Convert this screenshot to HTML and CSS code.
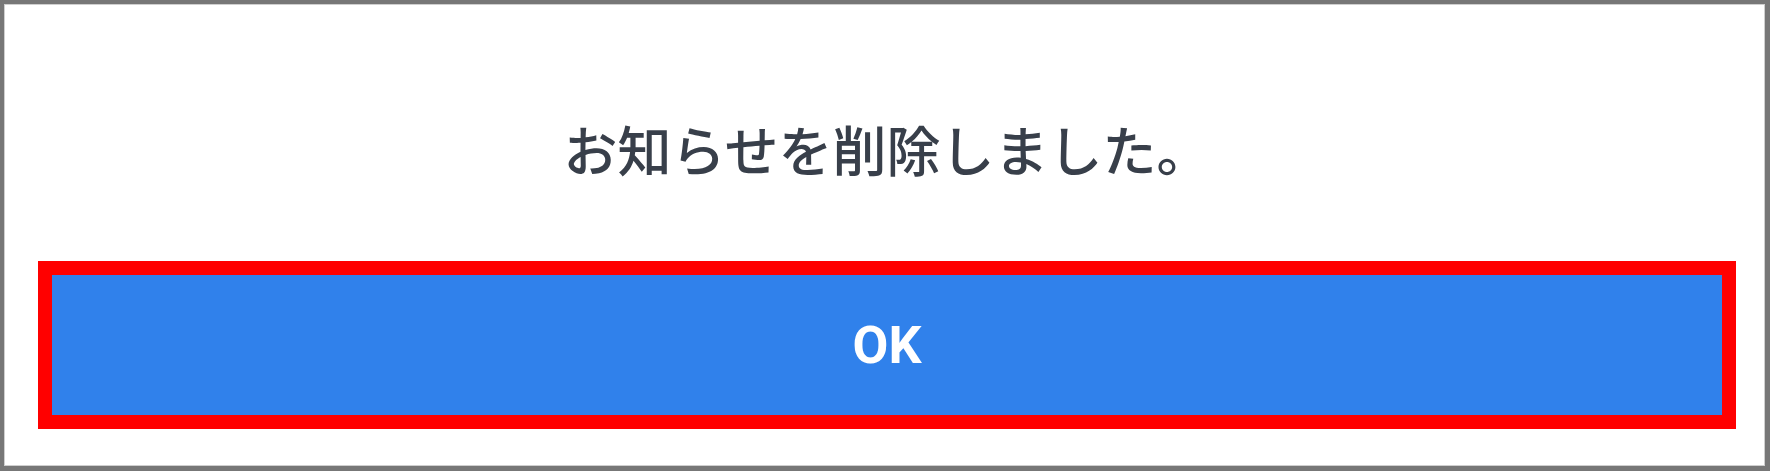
FILE: index.html
```html
<!DOCTYPE html>
<html lang="ja">
<head>
<meta charset="utf-8">
<link rel="stylesheet" href="styles.css">
</head>
<body>
<div class="dialog">
  <p class="message">お知らせを削除しました。</p>
  <div class="highlight">
    <button class="ok-button">OK</button>
  </div>
</div>
</body>
</html>
```
FILE: styles.css
```css
html, body {
  margin: 0;
  padding: 0;
  background: #ffffff;
}
.dialog {
  box-sizing: border-box;
  width: 1770px;
  height: 471px;
  border: 4px solid #777777;
  border-right-width: 5px;
  border-bottom-width: 5px;
  box-shadow: inset 0 0 0 1px #cfcfcf;
  padding: 0 29px 0 34px;
  display: flex;
  flex-direction: column;
  background: #ffffff;
}
.message {
  margin: 115px 0 0;
  height: 60px;
  line-height: 60px;
  font-family: "Noto Sans CJK JP", "Noto Sans", sans-serif;
  font-weight: 500;
  font-size: 54px;
  color: #383f4a;
  text-align: center;
}
.highlight {
  margin-top: 82px;
  border: 14px solid #ff0000;
  height: 140px;
  display: flex;
}
.ok-button {
  flex: 1;
  border: none;
  margin: 0;
  padding: 0;
  background: #3081eb;
  color: #ffffff;
  font-family: Roboto, "Liberation Sans", sans-serif;
  font-weight: 700;
  font-size: 52px;
}
```
